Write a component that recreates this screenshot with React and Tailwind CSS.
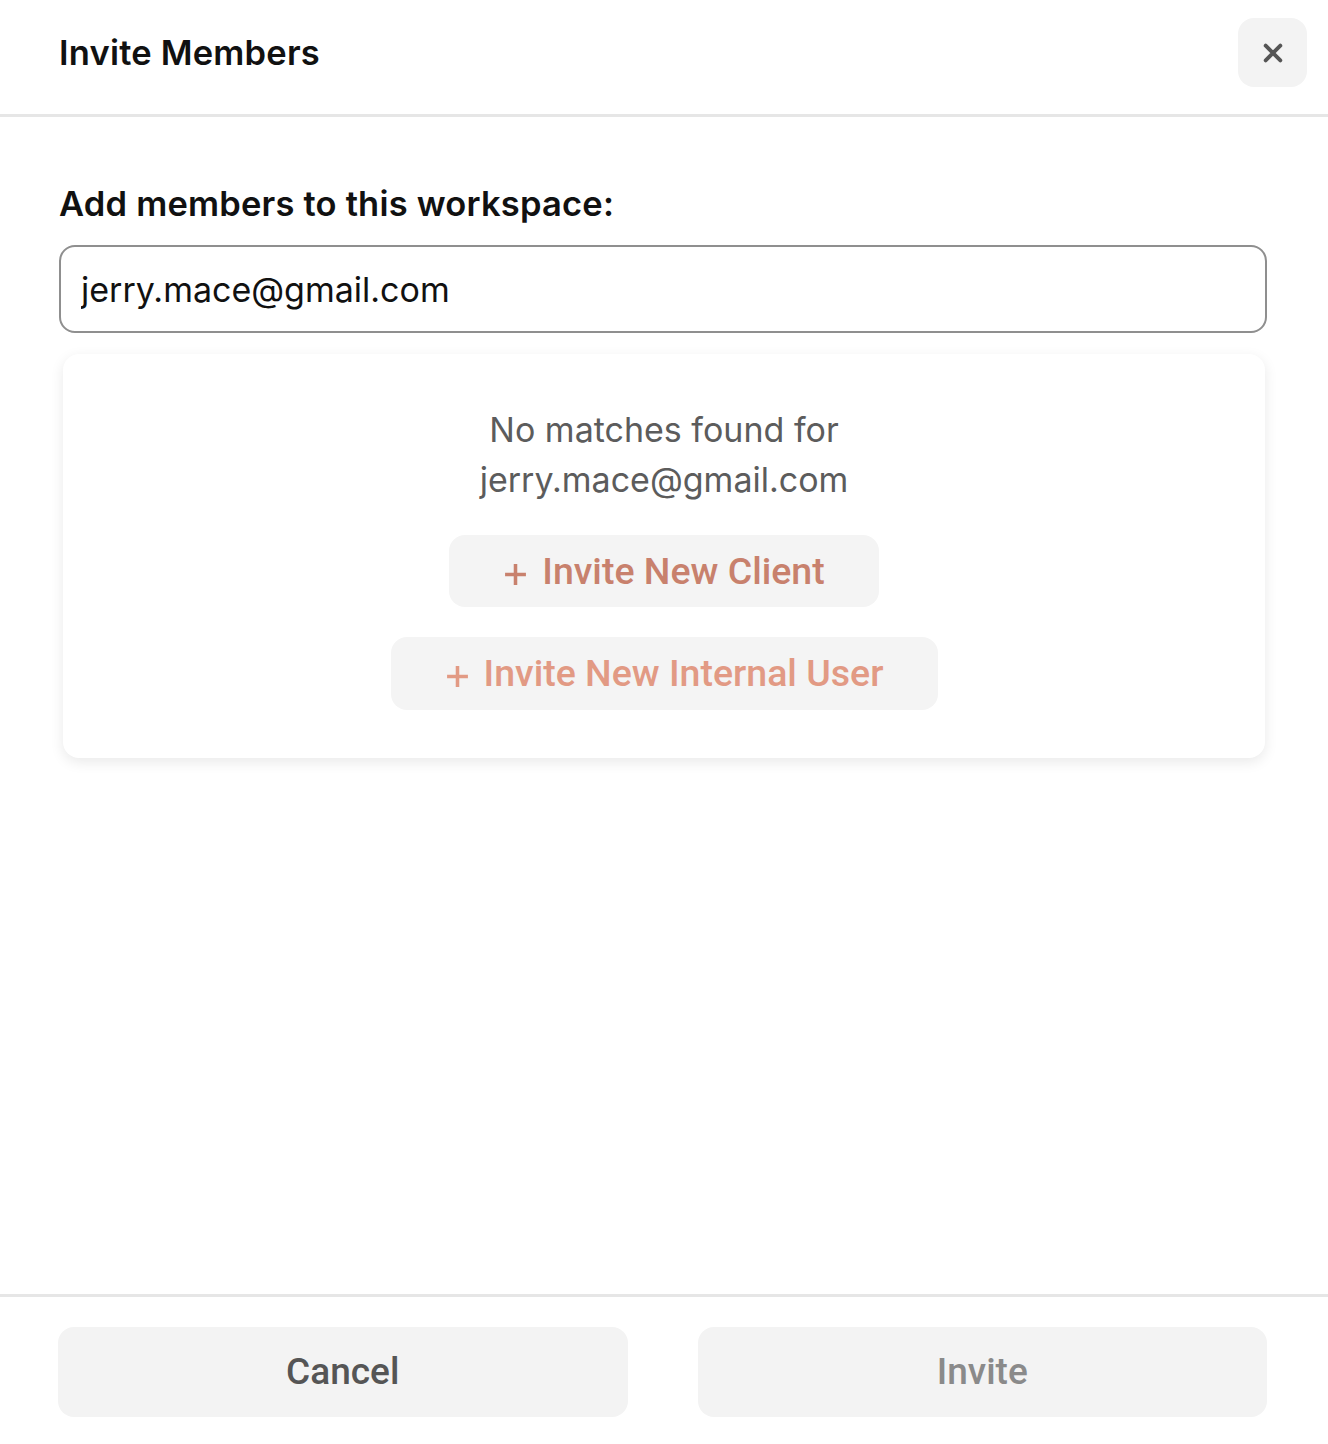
import React, { useState } from 'react';

function PlusIcon({ className }) {
  return (
    <svg viewBox="0 0 24 24" className={className} fill="none" stroke="currentColor" strokeWidth="3.4" strokeLinecap="butt">
      <path d="M12 2v20M2 12h20" />
    </svg>
  );
}

function App() {
  const [email, setEmail] = useState('jerry.mace@gmail.com');

  return (
    <div className="w-[1328px] h-[1444px] bg-white flex flex-col font-['Inter','Liberation_Sans',sans-serif]">
      {/* header */}
      <div className="h-[117px] shrink-0 border-b-[3px] border-[#e6e6e6] flex items-start justify-between pl-[59px] pr-[21px]">
        <h1 className="mt-[27px] text-[34.5px] font-semibold text-[#111] tracking-[0.2px]">Invite Members</h1>
        <button className="mt-[18px] w-[69px] h-[69px] rounded-[16px] bg-[#f3f3f3] flex items-center justify-center text-[#555]">
          <svg viewBox="0 0 24 24" className="w-[22px] h-[22px]" fill="none" stroke="currentColor" strokeWidth="4.2" strokeLinecap="round">
            <path d="M4 4l16 16M20 4L4 20" />
          </svg>
        </button>
      </div>

      {/* body */}
      <div className="flex-1 px-[59px] pt-[63px]">
        <label className="block text-[34.5px] font-semibold text-[#111] leading-[48px] tracking-[0.2px]">Add members to this workspace:</label>
        <input
          value={email}
          onChange={(e) => setEmail(e.target.value)}
          className="mt-[17px] w-[1208px] h-[88px] rounded-[16px] border-2 border-[#8f8f8f] px-[20px] text-[34px] text-[#111] outline-none"
        />

        <div className="mt-[21px] mx-[4px] rounded-[16px] bg-white shadow-[0_4px_14px_rgba(0,0,0,0.09)] flex flex-col items-center pt-[51px] pb-[48px]">
          <p className="text-[34px] leading-[50px] text-[#5c5c5c] text-center">
            No matches found for
            <br />
            jerry.mace@gmail.com
          </p>
          <button className="mt-[30px] h-[72px] w-[430px] rounded-[16px] bg-[#f4f4f4] flex items-center justify-center gap-[14px] text-[#c8816d] font-['Roboto',sans-serif] font-medium text-[37.5px]">
            <PlusIcon className="w-[25px] h-[25px] mt-[6px]" />
            <span>Invite New Client</span>
          </button>
          <button className="mt-[30px] h-[73px] w-[547px] rounded-[16px] bg-[#f4f4f4] flex items-center justify-center gap-[14px] text-[#e29a84] font-['Roboto',sans-serif] font-medium text-[37.5px]">
            <PlusIcon className="w-[25px] h-[25px] mt-[6px]" />
            <span>Invite New Internal User</span>
          </button>
        </div>
      </div>

      {/* footer */}
      <div className="h-[150px] shrink-0 border-t-[3px] border-[#e6e6e6] flex gap-[70px] pl-[58px] pr-[61px] pt-[30px]">
        <button className="flex-1 h-[90px] rounded-[16px] bg-[#f3f3f3] text-[37px] font-medium text-[#555] font-['Roboto',sans-serif]">Cancel</button>
        <button className="flex-1 h-[90px] rounded-[16px] bg-[#f3f3f3] text-[37px] font-medium text-[#8a8a8a] font-['Roboto',sans-serif]">Invite</button>
      </div>
    </div>
  );
}

export default App;
